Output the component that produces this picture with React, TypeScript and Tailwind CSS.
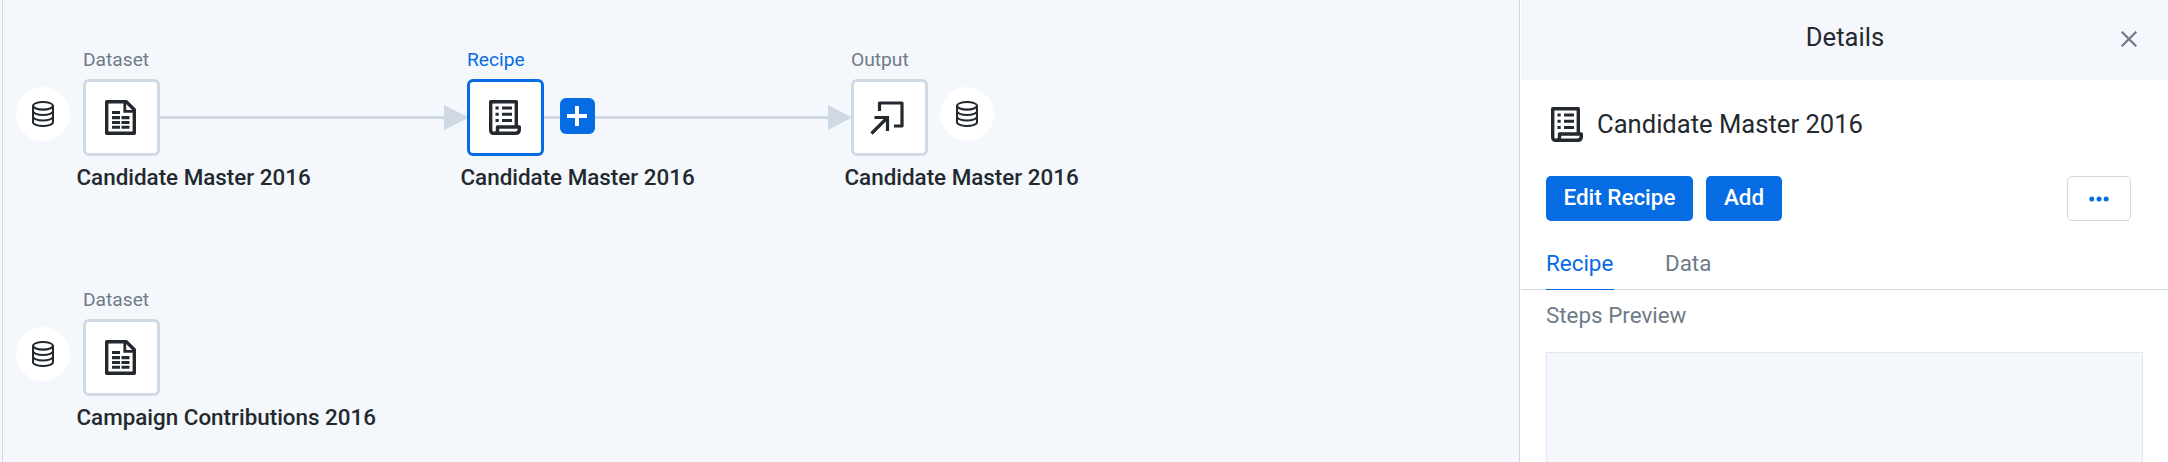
import React from 'react';

type IconProps = { className?: string };

const DatabaseIcon = ({ className = '' }: IconProps) => (
  <svg className={className} width="22" height="26" viewBox="0 0 22 26" fill="none" stroke="#23292e" strokeWidth="2.1">
    <ellipse cx="11" cy="4.8" rx="10" ry="3.8" />
    <path d="M1 4.8V21.2C1 23.3 5.5 25 11 25S21 23.3 21 21.2V4.8" />
    <path d="M1 10.2C1 12.3 5.5 14 11 14S21 12.3 21 10.2" />
    <path d="M1 15.7C1 17.8 5.5 19.5 11 19.5S21 17.8 21 15.7" />
  </svg>
);

const DatasetIcon = () => (
  <svg className="mr-0.5" width="31" height="35" viewBox="0 0 31 35" fill="none">
    <path d="M1.7 1.7H21.3L29.3 9.7V33.3H1.7Z" stroke="#23292e" strokeWidth="3.4" strokeLinejoin="round" />
    <path d="M19.8 2V11.3H29" stroke="#23292e" strokeWidth="2.8" />
    <path d="M7 12.5H15M7 17.6H15M7 22.5H15M7 27.3H15M16.5 17.6H24.5M16.5 22.5H24.5M16.5 27.3H24.5" stroke="#23292e" strokeWidth="3.1" />
  </svg>
);

const RecipeIcon = () => (
  <svg className="mr-px" width="32" height="35" viewBox="0 0 32 35" fill="none" stroke="#23292e" strokeWidth="3.4">
    <path d="M27.3 26V1.7H1.7V30.3C1.7 32.2 2.8 33.3 4.7 33.3H26.5C29 33.3 30.3 32 30.3 29.5V27H8.5V30.5C8.5 32.3 7.5 33.3 5.5 33.3" strokeLinejoin="round" />
    <path d="M6.5 8H9.7M6.5 14.3H9.7M6.5 20.5H9.7M13 8H23M13 14.3H23M13 20.5H23" strokeWidth="3" />
  </svg>
);

const OutputIcon = () => (
  <svg className="mr-[5px]" width="34" height="34" viewBox="0 0 34 34" fill="none" stroke="#23292e" strokeWidth="3.2">
    <path d="M9.5 10V2H32V25H24" strokeLinejoin="round" />
    <path d="M4.5 16.5H17.5V30" />
    <path d="M17 17L1.5 32.5" />
  </svg>
);

type NodeProps = {
  place: string;
  kind: string;
  name: string;
  icon: React.ReactNode;
  selected?: boolean;
};

const FlowNode = ({ place, kind, name, icon, selected }: NodeProps) => (
  <div className={`absolute flex flex-col whitespace-nowrap ${place}`}>
    <span className={`ml-[7px] h-[31px] text-[19.2px] leading-6 ${selected ? 'text-[#066ce4]' : 'text-[#6f7b86]'}`}>{kind}</span>
    <div
      className={`ml-[7px] flex size-[77px] items-center justify-center rounded-[6px] border-3 bg-white ${
        selected ? 'border-[#066ce4]' : 'border-[#cfd9e3]'
      }`}
    >
      {icon}
    </div>
    <span className="mt-[7px] ml-[0.5px] text-[22.4px] leading-7 font-medium text-[#23292e]">{name}</span>
  </div>
);

const SourceBadge = ({ place }: { place: string }) => (
  <div className={`absolute flex size-[54px] items-center justify-center rounded-full bg-white ${place}`}>
    <DatabaseIcon />
  </div>
);

const Canvas = () => (
  <main className="relative ml-0.5 flex-1 border-l border-[#cfd9e3]">
    <svg className="absolute top-[105px] left-[157px]" width="692" height="25" viewBox="0 0 692 25">
      <path d="M0 12.5H284M308 12.5H668" stroke="#cfd9e3" strokeWidth="3" />
      <path d="M284 0L309 12.5L284 25ZM668 0L692 12.5L668 25Z" fill="#cfd9e3" />
    </svg>
    <SourceBadge place="top-[87px] left-[13px]" />
    <FlowNode place="top-[48px] left-[73px]" kind="Dataset" name="Candidate Master 2016" icon={<DatasetIcon />} />
    <FlowNode place="top-[48px] left-[457px]" kind="Recipe" name="Candidate Master 2016" icon={<RecipeIcon />} selected />
    <button className="absolute top-[98px] left-[556.5px] flex size-[35.5px] items-center justify-center rounded-[6px] bg-[#066ce4]">
      <svg width="20" height="20" viewBox="0 0 20 20" stroke="#fff" strokeWidth="4">
        <path d="M10 0V20M0 10H20" />
      </svg>
    </button>
    <FlowNode place="top-[48px] left-[841px]" kind="Output" name="Candidate Master 2016" icon={<OutputIcon />} />
    <SourceBadge place="top-[87px] left-[937px]" />
    <SourceBadge place="top-[327px] left-[13px]" />
    <FlowNode place="top-[288px] left-[73px]" kind="Dataset" name="Campaign Contributions 2016" icon={<DatasetIcon />} />
  </main>
);

const Details = () => (
  <aside className="flex w-[649px] flex-col border-l border-[#cfd9e3] bg-white">
    <header className="ml-px flex h-20 shrink-0 items-center bg-[#f4f7fc] pr-[31px] pb-[3px] pl-12">
      <h1 className="flex-1 pb-[3px] text-center text-[25.6px] leading-8 text-[#23292e]">Details</h1>
      <svg width="16" height="16" viewBox="0 0 16 16" stroke="#6f7b86" strokeWidth="2.2">
        <path d="M0.7 0.7L15.3 15.3M15.3 0.7L0.7 15.3" />
      </svg>
    </header>
    <div className="flex h-24 shrink-0 items-center gap-[13px] pb-[7px] pl-[31px]">
      <RecipeIcon />
      <h2 className="pb-0.5 text-[25.6px] leading-8 text-[#23292e]">Candidate Master 2016</h2>
    </div>
    <div className="flex h-[45px] shrink-0 gap-[13px] pr-[37px] pl-[26px] text-[22.4px] leading-7 font-medium text-white">
      <button className="w-[147px] rounded-[5px] bg-[#066ce4] pb-1">Edit Recipe</button>
      <button className="w-[76px] rounded-[5px] bg-[#066ce4] pb-1">Add</button>
      <button className="ml-auto flex w-16 items-center justify-center rounded-[5px] border border-[#cfd9e3]">
        <svg className="mr-px" width="20" height="6" viewBox="0 0 20 6" fill="#066ce4">
          <circle cx="2.8" cy="3" r="2.5" />
          <circle cx="10" cy="3" r="2.5" />
          <circle cx="17.2" cy="3" r="2.5" />
        </svg>
      </button>
    </div>
    <nav className="ml-px flex h-[69px] shrink-0 items-end gap-[51px] border-b border-[#cfd9e3] pl-[25px] text-[22.4px] text-[#6f7b86]">
      <span className="-mb-px flex h-[41px] w-[68px] border-b border-[#066ce4] leading-7 text-[#066ce4]">Recipe</span>
      <span className="-mb-px h-[41px] leading-7">Data</span>
    </nav>
    <h3 className="mt-[11px] h-[51px] shrink-0 pl-[26px] text-[22.4px] leading-7 text-[#6f7b86]">Steps Preview</h3>
    <div className="mr-[25px] ml-[26px] flex-1 border border-b-0 border-[#dfe7f0] bg-[#f4f7fc]" />
  </aside>
);

export default function App() {
  return (
    <div className="flex h-[462px] w-[2168px] overflow-hidden bg-[#f4f7fc] font-[Roboto,sans-serif]">
      <Canvas />
      <Details />
    </div>
  );
}
